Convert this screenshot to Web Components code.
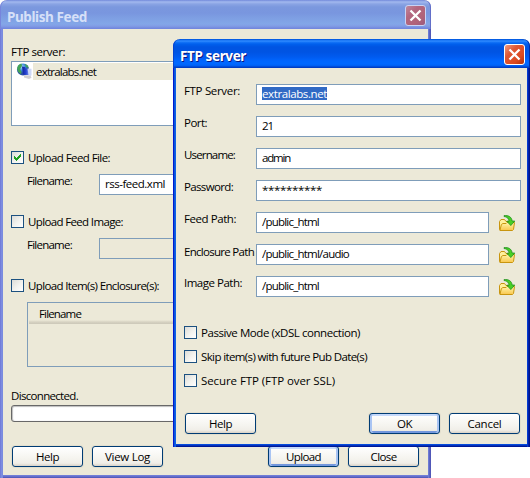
<!DOCTYPE html>
<html lang="en"><head><meta charset="utf-8"><title>Publish Feed</title>
<style>
html,body{margin:0;height:100%;background:#fff;overflow:hidden}
body{position:relative;font:11.5px/16px "Open Sans","Noto Sans",sans-serif;color:#000}
</style></head><body>
<publish-window></publish-window>
<ftp-dialog></ftp-dialog>
<script>
const define=(name,html,setup)=>customElements.define(name,class extends HTMLElement{
  connectedCallback(){
    if(this.shadowRoot)return;
    const root=this.attachShadow({mode:'open'});
    root.innerHTML=html;
    if(setup)setup(this,root);
  }
});

/* Text run tracked to a fixed width. */
define('ui-text',`<style>:host{display:block;height:16px;white-space:pre;flex:none}span{display:inline-block;line-height:16px}</style><span><slot></slot></span>`,(el,root)=>{
  const s=root.querySelector('span'),w=+el.getAttribute('w');
  if(!w)return;
  el.style.width=w+'px';
  const n=el.textContent.length;
  s.style.letterSpacing=((w-s.getBoundingClientRect().width)/n)+'px';
});

define('ui-window',`<style>
:host{display:flex;flex-direction:column;box-sizing:border-box;border-radius:7px 7px 0 0;overflow:hidden;padding:0 3px 3px;
 background:linear-gradient(90deg,#0019cf 0,#0019cf 1px,#0855dd 1px,#0855dd 2px,#166aee 2px,#0855dd 3px,transparent 3px,transparent calc(100% - 3px),#0842d8 calc(100% - 3px),#0030c8 calc(100% - 2px),#00138c calc(100% - 1px)),linear-gradient(0deg,#00138c 0,#001ea0 1px,#0441d8 2px,#0855dd 3px,#ece9d8 3px)}
:host([inactive]){background:linear-gradient(90deg,#6b73d5 0,#7b88dd 1px,#7f91e2 2px,#7585dc 3px,transparent 3px,transparent calc(100% - 3px),#7683d8 calc(100% - 3px),#6573cf calc(100% - 2px),#5057b8 calc(100% - 1px)),linear-gradient(0deg,#4c52b4 0,#5c66c5 1px,#6d77d2 2px,#7585dc 3px,#ece9d8 3px)}
header{flex:none;margin:0 -3px;padding:5px 5px 0 7px;height:29px;box-sizing:border-box;display:flex;justify-content:space-between;border-radius:7px 7px 0 0;
 background:linear-gradient(#0050d8 0,#0b69ef 1px,#368fff 2px,#1676f8 3px,#0060ed 5px,#0054e2 8px,#0054e3 13px,#005bf0 18px,#0066ff 22px,#0068ff 25px,#005df0 27px,#0041ca 28px,#003abf 29px);
 box-shadow:inset 1px 0 #0744cf,inset -1px 0 #002caa;
 color:#fff;font:bold 13.5px/20px "Noto Sans","Open Sans",sans-serif;text-shadow:1px 1px #0a1883}
:host([inactive]) header{background:linear-gradient(#7187d9 0,#8ca4e6 1px,#a2b8ee 2px,#8aa4e4 4px,#7b98de 7px,#7996df 13px,#7e9fe3 18px,#83a6e8 24px,#829de5 26px,#748adf 28px,#7184dd 29px);box-shadow:inset 1px 0 #7785dc,inset -1px 0 #626fc9;color:#d6e0f8;text-shadow:none}
ui-text{margin-top:2px}
svg{display:block;width:21px;height:21px}
main{display:flex;flex-direction:column;flex:1;background:#ece9d8}
</style><header><span class="t"></span><svg viewBox="0 0 21 21"><defs><linearGradient id="r" x2="1" y2="1"><stop offset="0" stop-color="#f3a184"/><stop offset=".35" stop-color="#df5835"/><stop offset=".7" stop-color="#dc4a20"/><stop offset="1" stop-color="#a92d0a"/></linearGradient></defs><rect x=".5" y=".5" width="20" height="20" rx="2.5" fill="url(#r)" stroke="#fff"/><path d="M5.500 5.500l10 10M15.500 5.500l-10 10" stroke="#fff" stroke-width="2.3"/></svg></header><main><slot></slot></main>`,(el,root)=>{
  if(el.hasAttribute('inactive')){
    const st=root.querySelectorAll('stop');
    ['#c08b9f','#b3667f','#b06378','#985a83'].forEach((c,i)=>st[i].setAttribute('stop-color',c));
    root.querySelector('rect').setAttribute('stroke','#c9d3f4');
  }
  root.querySelector('.t').innerHTML=`<ui-text w="${el.getAttribute('tw')}">${el.getAttribute('heading')}</ui-text>`;
});

define('ui-button',`<style>:host{display:flex;justify-content:center;box-sizing:border-box;width:71px;height:21px;flex:none;padding-top:2px;border:1px solid #003c74;border-radius:3px;background:linear-gradient(#fff,#f5f4ef 60%,#f0eee8 85%,#d9d2c7);box-shadow:0 0 0 1px #e3dfce}
:host([primary]){box-shadow:0 0 0 1px #e3dfce,inset 2px 0 #a9c4f3,inset -2px 0 #a9c4f3,inset 0 2px #c5d9fb,inset 0 -2px #7397dd}</style><slot></slot>`);

define('ui-check',`<style>:host{display:flex;height:16px;gap:4px;flex:none}i{box-sizing:border-box;width:13px;height:13px;margin-top:1px;border:1px solid #1c5180;background:linear-gradient(135deg,#dcdcd7,#f3f3ef 55%,#fff)}svg{display:none;width:11px;height:11px}:host([checked]) svg{display:block}</style><i><svg viewBox="0 0 11 11"><path shape-rendering="crispEdges" fill="#21a121" d="M2 4h1v3h-1zM3 5h1v3h-1zM4 6h1v3h-1zM5 5h1v3h-1zM6 4h1v3h-1zM7 3h1v3h-1zM8 2h1v3h-1z"/></svg></i><slot></slot>`);

define('ui-input',`<style>:host{display:block;box-sizing:border-box;height:21px;flex:none;border:1px solid #7f9db9;background:#fff;padding:1px 0 0 5px}:host([disabled]){background:#ece9d8}
:host([selected]) div{width:65px;height:13px;background:#316ac5;color:#fff;margin-top:1px}:host([selected]) div ::slotted(*){margin-top:-1px}div{display:flex}</style><div><slot></slot></div>`);

define('folder-icon',`<style>:host{display:block;width:17px;height:17px;margin:3px 0 0 10px}svg{display:block}</style>
<svg width="17" height="17" viewBox="0 0 17 17"><defs><linearGradient id="f" x2="0" y2="1"><stop offset="0" stop-color="#fff6ad"/><stop offset="1" stop-color="#f9c64c"/></linearGradient></defs>
<path d="M.5 14.500V6.500L2 4.500h3.500L7 6.500h6.500v8z" fill="#fff09c" stroke="#c8950f"/>
<path d="M.9 15.500l1.500-6 1.500-1h3.200l1-1h7.400l-1 7-1 1z" fill="url(#f)" stroke="#c8950f"/>
<path d="M5 .6c4.600-.5 7.600 1.300 8.200 5.400h2.600L11.800 10.600 7.800 6.200h2.300C9.800 3.600 8 1.700 5 1.500z" fill="#48cf25" stroke="#17881a" stroke-width=".7"/></svg>`);

define('globe-icon',`<style>:host{display:block;width:16px;height:16px;flex:none}svg{display:block}</style>
<svg width="16" height="16" viewBox="0 0 16 16"><defs><radialGradient id="g" cx=".4" cy=".3"><stop offset="0" stop-color="#a5e0f5"/><stop offset=".6" stop-color="#3a86d3"/><stop offset="1" stop-color="#2850a4"/></radialGradient><linearGradient id="m" x2="1"><stop offset="0" stop-color="#10209a"/><stop offset=".45" stop-color="#2444d4"/><stop offset="1" stop-color="#b9c9f6"/></linearGradient></defs>
<circle cx="7" cy="6.400" r="6" fill="url(#g)"/><path d="M1.200 5c.5-2.500 2-4 4.300-4.400L6 3 4 6l1.500 3-.5 2C2.500 10 1.200 8 1.200 5zM9 .8c2 .8 3.300 2.200 3.800 4L10 4z" fill="#43a455"/>
<path d="M6 3.500l3 .5 1 2 5 .5v6l-8-1z" fill="url(#m)"/><path d="M11.500 5.500l4 .3v6.700l-3-.4z" fill="#cdd8f7"/><path d="M8 12l6.500.7 1 2-2.500 1.300L8 14.500z" fill="#d0cfd2"/></svg>`);

define('publish-window',`<style>
:host{position:absolute;left:0;top:0;width:431px;height:478px;display:block}ui-window{height:478px}
.c{display:flex;flex-direction:column;padding:15px 8px 0}
.list{box-sizing:border-box;height:65px;border:1px solid #7f9db9;background:#fff;margin:1px 0 24px;padding:1px 0 0 4px}
.item{display:flex;height:17px}.item div{flex:1;background:#ece9d8;margin-left:1px;padding:1px 0 0 3px;height:16px}
.row{display:grid;grid-template-columns:72px 1fr;height:21px;margin:8px 0 19px 16px}.row>ui-text{margin-top:-1px}
.files{box-sizing:border-box;height:65px;margin:8px 0 21px 16px;border:1px solid #7f9db9;padding:1px}
.head{height:20px;box-sizing:border-box;padding:2px 0 0 10px;background:linear-gradient(#ece9d8 16px,#e2decd 17px,#d6d2c2 18px,#cbc7b8 20px)}
.progress{height:17px;box-sizing:border-box;border:1px solid #686868;border-radius:3px;background:#fff;box-shadow:inset 0 1px 1px #bebebe,inset 1px 0 1px #bebebe;margin:1px 0 24px}
.buttons{display:flex;gap:9px;padding:0 1px}.buttons span{flex:1}
</style><ui-window inactive heading="Publish Feed" tw="80"><div class="c">
<ui-text w="54">FTP server:</ui-text>
<div class="list"><div class="item"><globe-icon></globe-icon><div><ui-text w="60">extralabs.net</ui-text></div></div></div>
<ui-check checked><ui-text w="82">Upload Feed File:</ui-text></ui-check>
<div class="row"><ui-text w="45">Filename:</ui-text><ui-input><ui-text w="60">rss-feed.xml</ui-text></ui-input></div>
<ui-check><ui-text w="95">Upload Feed Image:</ui-text></ui-check>
<div class="row"><ui-text w="45">Filename:</ui-text><ui-input disabled></ui-input></div>
<ui-check><ui-text w="131">Upload Item(s) Enclosure(s):</ui-text></ui-check>
<div class="files"><div class="head"><ui-text w="42">Filename</ui-text></div></div>
<ui-text w="67">Disconnected.</ui-text><div class="progress"></div>
<div class="buttons"><ui-button><ui-text w="23">Help</ui-text></ui-button><ui-button><ui-text w="45">View Log</ui-text></ui-button><span></span><ui-button primary><ui-text w="35">Upload</ui-text></ui-button><ui-button><ui-text w="26">Close</ui-text></ui-button></div>
</div></ui-window>`);

define('ftp-dialog',`<style>
:host{position:absolute;left:173px;top:39px;width:357px;height:408px;display:block}ui-window{height:408px}
.c{display:flex;flex-direction:column;padding:16px 6px 0 8px}
.form{display:grid;grid-template-columns:72px 233px 32px;grid-auto-rows:21px;row-gap:11px}
.form>ui-text{margin-top:-1px}.form>.low{margin-top:0}.wide{grid-column:2/4}
.checks{display:flex;flex-direction:column;gap:8px;margin:28px 0 24px}
.buttons{display:flex;gap:9px;padding:0 1px}.buttons span{flex:1}
</style><ui-window heading="FTP server" tw="66"><div class="c"><div class="form">
<ui-text w="56">FTP Server:</ui-text><ui-input class="wide" selected><ui-text w="65">extralabs.net</ui-text></ui-input>
<ui-text w="23">Port:</ui-text><ui-input class="wide"><ui-text w="11">21</ui-text></ui-input>
<ui-text w="51">Username:</ui-text><ui-input class="wide"><ui-text w="28">admin</ui-text></ui-input>
<ui-text w="49">Password:</ui-text><ui-input class="wide"><ui-text w="60">**********</ui-text></ui-input>
<ui-text w="52">Feed Path:</ui-text><ui-input><ui-text w="57">/public_html</ui-text></ui-input><folder-icon></folder-icon>
<ui-text class="low" w="70">Enclosure Path</ui-text><ui-input><ui-text w="87">/public_html/audio</ui-text></ui-input><folder-icon></folder-icon>
<ui-text w="58">Image Path:</ui-text><ui-input><ui-text w="57">/public_html</ui-text></ui-input><folder-icon></folder-icon>
</div><div class="checks">
<ui-check><ui-text w="159">Passive Mode (xDSL connection)</ui-text></ui-check>
<ui-check><ui-text w="166">Skip item(s) with future Pub Date(s)</ui-text></ui-check>
<ui-check><ui-text w="134">Secure FTP (FTP over SSL)</ui-text></ui-check>
</div><div class="buttons"><ui-button><ui-text w="23">Help</ui-text></ui-button><span></span><ui-button primary><ui-text w="15">OK</ui-text></ui-button><ui-button><ui-text w="34">Cancel</ui-text></ui-button></div>
</div></ui-window>`);
</script></body></html>
